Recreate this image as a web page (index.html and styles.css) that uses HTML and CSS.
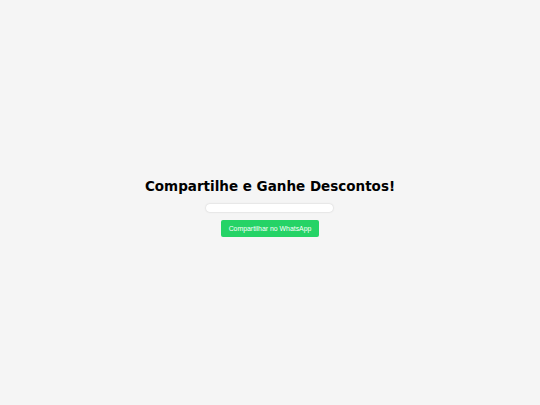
FILE: index.html
```html
<!DOCTYPE html>
<html lang="pt">
<head>
<meta charset="utf-8">
<link rel="stylesheet" href="styles.css">
</head>
<body>
<main class="page">
  <h1 class="title">Compartilhe e Ganhe Descontos!</h1>
  <div class="link-box"></div>
  <button class="share-btn">Compartilhar no WhatsApp</button>
</main>
</body>
</html>
```
FILE: styles.css
```css
html, body {
  margin: 0;
  padding: 0;
  height: 100%;
  background: #f5f5f5;
}
.page {
  box-sizing: border-box;
  height: 100%;
  padding-top: 9px;
  display: flex;
  flex-direction: column;
  align-items: center;
  justify-content: center;
}
.title {
  margin: 0;
  font-family: "DejaVu Sans", sans-serif;
  font-weight: bold;
  font-size: 13.5px;
  line-height: 18px;
  color: #000;
}
.link-box {
  margin-top: 9px;
  margin-right: 1px;
  width: 127px;
  height: 8px;
  background: #fff;
  border-radius: 4px;
  box-shadow: 0 0 2px rgba(0,0,0,0.2);
}
.share-btn {
  margin-top: 8px;
  width: 98px;
  height: 17px;
  padding: 0;
  border: none;
  border-radius: 2px;
  background: #25d366;
  color: #fff;
  font-family: "Liberation Sans", Arial, sans-serif;
  font-size: 6.9px;
  line-height: 17px;
}
```
